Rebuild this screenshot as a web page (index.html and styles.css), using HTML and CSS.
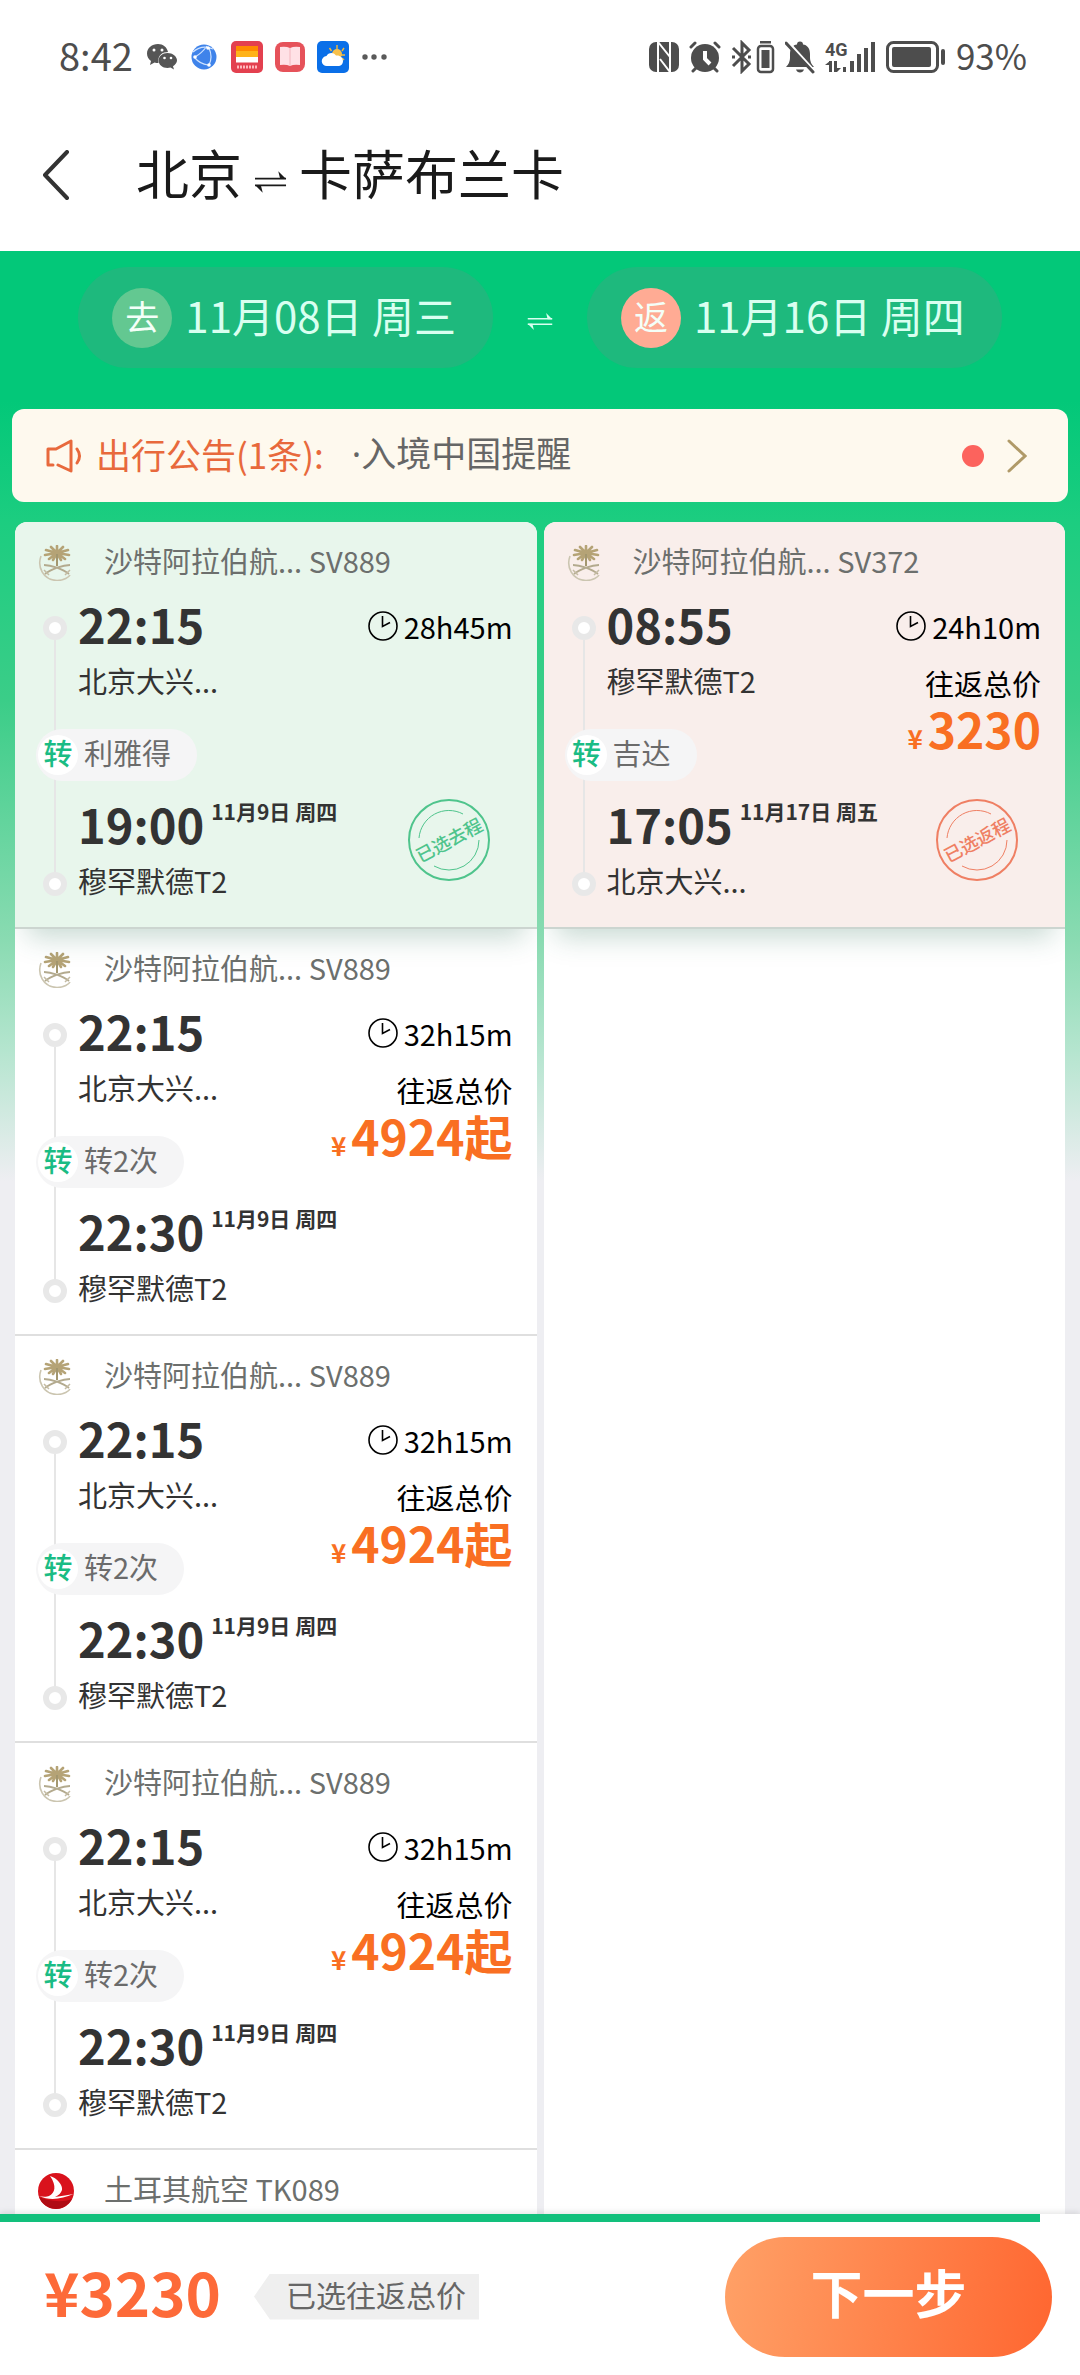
FILE: index.html
```
<!DOCTYPE html>
<html lang="zh-CN">
<head>
<meta charset="utf-8">
<meta name="viewport" content="width=device-width, initial-scale=1">
<title>北京 ⇌ 卡萨布兰卡</title>
<link rel="stylesheet" href="styles.css">
</head>
<body>
<svg class="sprite" aria-hidden="true">
  <symbol id="swap" viewBox="0 0 34 24">
    <path d="M1 8.500H33M1 15.500H33" fill="none" stroke="currentColor" stroke-width="2"/>
    <path d="M25 1l8 8h-6zM9 23l-8-8h6z" fill="currentColor"/>
  </symbol>
  <symbol id="clock" viewBox="0 0 30 30">
    <circle cx="15" cy="15" r="14" fill="none" stroke="currentColor" stroke-width="1.600"/>
    <path d="M14.500 5v10.500l7.500-4" fill="none" stroke="currentColor" stroke-width="1.600"/>
  </symbol>
  <symbol id="saudia" viewBox="0 0 36 36">
    <path d="M3 11C-1 22 5 35 19 35.500C26 35.500 31 32 32 30" fill="none" stroke="#cbc5b0" stroke-width="1.600"/>
    <path d="M19 8L8 5M19 8L7 10M19 8L13 2M19 8L11 14M19 8L19 1M19 8L25 2M19 8L30 5M19 8L31 10M19 8L27 14M19 8L15 15M19 8L23 15" stroke="#b5a376" stroke-width="2.600" stroke-linecap="round"/>
    <path d="M19 9v12" stroke="#a3976f" stroke-width="2"/>
    <path d="M6 20C13 20 25 24 31 29M32 20C25 20 13 24 7 29" fill="none" stroke="#b3aa8e" stroke-width="1.800"/>
    <path d="M6 25l5 5M32 25l-5 5" fill="none" stroke="#c4bca4" stroke-width="1.500"/>
  </symbol>
  <symbol id="turkish" viewBox="0 0 36 36">
    <circle cx="18" cy="18" r="18" fill="#d9121c"/>
    <path d="M1 24A18 18 0 0 0 34 26C24 30 10 28 1 24z" fill="#b00c14"/>
    <path d="M12 3C19 5 25 12 24 17C23 20 21 22 17 24C24 23 30 22 35.500 21C24 26 12 28 1 23C4 24 9 24 11 23C17 20 19 13 12 3z" fill="#fff"/>
  </symbol>
</svg>

<header class="top">
  <div class="status">
    <div class="status-side">
      <span class="status-time">8:42</span>
      <svg width="30" height="32" viewBox="0 0 30 32" fill="#555">
        <path d="M11 3C5 3 0 7 0 12.500c0 3 1.500 5.500 4 7.500l-1 4 4.500-2.500c1.300.4 2.500.5 4 .5C10 14 16 11 21 11C20 6 16 3 11 3z"/>
        <path d="M20.500 12c-5 0-9 3.500-9 7.500s4 7.500 9 7.500c1 0 2-.2 3-.5l3.500 2-1-3.300c2.400-1.500 4-3.500 4-5.700C30 15.500 25.500 12 20.500 12z"/>
        <g fill="#fff"><circle cx="7" cy="9" r="1.500"/><circle cx="15" cy="9" r="1.500"/><circle cx="17.500" cy="17" r="1.300"/><circle cx="24" cy="17" r="1.300"/></g>
      </svg>
      <svg width="32" height="32" viewBox="0 0 32 32">
        <circle cx="16" cy="16" r="12.500" fill="#3f83ea"/>
        <path d="M7 16Q14 12 19 5M21 7q4 9 0 17M7 17q5 6 13 7M5 11Q14 3 25 8" fill="none" stroke="#cfe3ff" stroke-width="1.200"/>
        <circle cx="7" cy="16" r="1.800" fill="#fff"/><circle cx="20" cy="7" r="1.800" fill="#fff"/><circle cx="21" cy="24" r="1.800" fill="#fff"/>
      </svg>
      <svg width="32" height="32" viewBox="0 0 32 32">
        <rect width="32" height="32" rx="5" fill="#e3404f"/>
        <path d="M5 5h22v6H5z" fill="#ff8a00"/><path d="M5 10h22v6H5z" fill="#ffb31a"/><path d="M5 16h22v5.500H5z" fill="#fff"/>
        <path d="M6 26h20" stroke="#ffb9bd" stroke-width="3" stroke-dasharray="2 1"/>
      </svg>
      <svg width="32" height="32" viewBox="0 0 32 32">
        <rect x="1" y="1" width="30" height="30" rx="8" fill="#e6525a"/>
        <path d="M6 6q6-1 10 1q4-2 10-1v18q-6-1-10 1q-4-2-10-1z" fill="#ffe1e6"/>
        <path d="M16 7v18" stroke="#f2b6be" stroke-width="1"/>
      </svg>
      <svg width="32" height="32" viewBox="0 0 32 32">
        <rect width="32" height="32" rx="5" fill="#0a6fe8"/>
        <path d="M20 4v4M12.500 7l2 3M27 7l-2 3M24 14h4M27 19l-2-2" stroke="#f3b93a" stroke-width="1.400"/>
        <circle cx="20" cy="13" r="5" fill="#f7c04a"/>
        <path d="M10 25a5 5 0 0 1-.5-10c1.500-3.500 7-4.500 9.500-.5c4-.5 7 2 7 5.500c0 3-2 5-5 5z" fill="#fff"/>
      </svg>
      <svg width="28" height="32" viewBox="0 0 28 32" fill="#5a5a5a"><circle cx="5" cy="16" r="2.700"/><circle cx="14" cy="16" r="2.700"/><circle cx="24" cy="16" r="2.700"/></svg>
    </div>
    <div class="status-side status-side-end">
      <svg width="30" height="32" viewBox="0 0 30 32">
        <rect y="1" width="30" height="30" rx="7" fill="#4d4d4d"/>
        <path d="M9 31V1L21 16V10M9 10V1M21 1V31L11 18" fill="none" stroke="#fff" stroke-width="2"/>
      </svg>
      <svg width="32" height="32" viewBox="0 0 32 32">
        <circle cx="16" cy="17" r="14" fill="#4d4d4d"/>
        <path d="M2 6L6 2M30 6L26 2M7 27l-3 3M25 27l3 3" stroke="#4d4d4d" stroke-width="3" stroke-linecap="round"/>
        <path d="M16 10v8l5 5" fill="none" stroke="#fff" stroke-width="4"/>
      </svg>
      <svg width="44" height="34" viewBox="0 0 44 34">
        <path d="M2 8L18 24L11 31V3L18 10L2 26M1 17h3M17 17h3" fill="none" stroke="#4d4d4d" stroke-width="3"/>
        <rect x="27" y="6" width="15" height="26" rx="3" fill="none" stroke="#4d4d4d" stroke-width="2.500"/>
        <path d="M30.500 10h8v18h-8zM29 1h11v2.500H29z" fill="#4d4d4d"/>
      </svg>
      <svg width="30" height="34" viewBox="0 0 30 34">
        <path d="M1 27q4-4 4-9v-4C5 8 8 5 12 4.500a3 3 0 0 1 6 0C22 5 25 8 25 14v4q0 5 4 9zM11 29.500h8q-1 3-4 3t-4-3z" fill="#4d4d4d"/>
        <path d="M3 2L31 33" stroke="#fff" stroke-width="3"/>
        <path d="M1 3L28 32" stroke="#4d4d4d" stroke-width="3" stroke-linecap="round"/>
      </svg>
      <svg width="51" height="34" viewBox="0 0 51 34" fill="#4d4d4d">
        <text class="net" x="0" y="16">4G</text>
        <path d="M4 21h3v11H4zM0 25l5-4v4zM9 21h3v11H9zM12 32l4-4h-4zM18 27h3v5h-3zM25 21h4v11h-4zM32 14h4v18h-4zM39 8h4v24h-4zM46 2h4v30h-4z"/>
      </svg>
      <svg width="60" height="34" viewBox="0 0 60 34">
        <rect x="1.500" y="2.500" width="50" height="29" rx="6" fill="none" stroke="#4d4d4d" stroke-width="3"/>
        <rect x="6" y="7" width="39" height="20" rx="2" fill="#4d4d4d"/>
        <rect x="55" y="9" width="4" height="16" rx="2" fill="#4d4d4d"/>
      </svg>
      <span class="status-level">93%</span>
    </div>
  </div>
  <div class="nav">
    <button class="back" type="button" aria-label="返回">
      <svg width="28" height="50" viewBox="0 0 28 50"><path d="M25 2L3 25L25 48" fill="none" stroke="#333" stroke-width="4" stroke-linecap="round" stroke-linejoin="round"/></svg>
    </button>
    <h1 class="route">北京<svg width="33" height="24"><use href="#swap"/></svg>卡萨布兰卡</h1>
  </div>
</header>

<main class="main">
  <div class="dates">
    <button class="date" type="button"><span class="date-tag">去</span><span class="date-text">11月08日 周三</span></button>
    <svg class="dates-swap" width="26" height="19"><use href="#swap"/></svg>
    <button class="date" type="button"><span class="date-tag date-tag-return">返</span><span class="date-text">11月16日 周四</span></button>
  </div>

  <a class="notice" href="#notice">
    <svg width="38" height="34" viewBox="0 0 38 34" fill="none" stroke="#e8693c" stroke-width="3" stroke-linecap="round" stroke-linejoin="round">
      <path d="M7 26H2V10H10L25 2V32L12 26M31 10q5 7 0 14"/>
    </svg>
    <span class="notice-title">出行公告(1条):</span>
    <span class="notice-text">·入境中国提醒</span>
    <span class="notice-dot"></span>
    <svg width="20" height="34" viewBox="0 0 20 34"><path d="M2 2L18 17L2 32" fill="none" stroke="#b09a68" stroke-width="3" stroke-linecap="round"/></svg>
  </a>

  <div class="columns">
    <section class="column" aria-label="去程">
      <article class="flight flight-go">
        <h2 class="carrier"><svg width="36" height="36"><use href="#saudia"/></svg><span>沙特阿拉伯航... SV889</span></h2>
        <div class="trip">
          <div class="rail"><i></i><i></i></div>
          <div class="time depart">22:15</div>
          <div class="place depart-place">北京大兴...</div>
          <div class="stop"><b>转</b>利雅得</div>
          <div class="time arrive">19:00<sup>11月9日 周四</sup></div>
          <div class="place arrive-place">穆罕默德T2</div>
          <div class="side">
            <div class="duration"><svg width="30" height="30"><use href="#clock"/></svg>28h45m</div>
          </div>
          <svg class="stamp stamp-go" width="84" height="84" viewBox="0 0 84 84">
            <circle cx="42" cy="42" r="40" fill="none" stroke="currentColor" stroke-width="2"/>
            <path d="M12 40A30 30 0 0 1 56 16M27 68A30 30 0 0 0 72 42" fill="none" stroke="currentColor" stroke-width="1"/>
            <text x="42" y="49" text-anchor="middle" transform="rotate(-28 42 42)">已选去程</text>
          </svg>
        </div>
      </article>
      <article class="flight">
        <h2 class="carrier"><svg width="36" height="36"><use href="#saudia"/></svg><span>沙特阿拉伯航... SV889</span></h2>
        <div class="trip">
          <div class="rail"><i></i><i></i></div>
          <div class="time depart">22:15</div>
          <div class="place depart-place">北京大兴...</div>
          <div class="stop"><b>转</b>转2次</div>
          <div class="time arrive">22:30<sup>11月9日 周四</sup></div>
          <div class="place arrive-place">穆罕默德T2</div>
          <div class="side">
            <div class="duration"><svg width="30" height="30"><use href="#clock"/></svg>32h15m</div>
            <div class="label">往返总价</div>
            <div class="price"><small>¥</small>4924起</div>
          </div>
        </div>
      </article>
      <article class="flight">
        <h2 class="carrier"><svg width="36" height="36"><use href="#saudia"/></svg><span>沙特阿拉伯航... SV889</span></h2>
        <div class="trip">
          <div class="rail"><i></i><i></i></div>
          <div class="time depart">22:15</div>
          <div class="place depart-place">北京大兴...</div>
          <div class="stop"><b>转</b>转2次</div>
          <div class="time arrive">22:30<sup>11月9日 周四</sup></div>
          <div class="place arrive-place">穆罕默德T2</div>
          <div class="side">
            <div class="duration"><svg width="30" height="30"><use href="#clock"/></svg>32h15m</div>
            <div class="label">往返总价</div>
            <div class="price"><small>¥</small>4924起</div>
          </div>
        </div>
      </article>
      <article class="flight">
        <h2 class="carrier"><svg width="36" height="36"><use href="#saudia"/></svg><span>沙特阿拉伯航... SV889</span></h2>
        <div class="trip">
          <div class="rail"><i></i><i></i></div>
          <div class="time depart">22:15</div>
          <div class="place depart-place">北京大兴...</div>
          <div class="stop"><b>转</b>转2次</div>
          <div class="time arrive">22:30<sup>11月9日 周四</sup></div>
          <div class="place arrive-place">穆罕默德T2</div>
          <div class="side">
            <div class="duration"><svg width="30" height="30"><use href="#clock"/></svg>32h15m</div>
            <div class="label">往返总价</div>
            <div class="price"><small>¥</small>4924起</div>
          </div>
        </div>
      </article>
      <article class="flight">
        <h2 class="carrier"><svg width="36" height="36"><use href="#turkish"/></svg><span>土耳其航空 TK089</span></h2>
      </article>
    </section>

    <section class="column" aria-label="返程">
      <article class="flight flight-return">
        <h2 class="carrier"><svg width="36" height="36"><use href="#saudia"/></svg><span>沙特阿拉伯航... SV372</span></h2>
        <div class="trip">
          <div class="rail"><i></i><i></i></div>
          <div class="time depart">08:55</div>
          <div class="place depart-place">穆罕默德T2</div>
          <div class="stop"><b>转</b>吉达</div>
          <div class="time arrive">17:05<sup>11月17日 周五</sup></div>
          <div class="place arrive-place">北京大兴...</div>
          <div class="side">
            <div class="duration"><svg width="30" height="30"><use href="#clock"/></svg>24h10m</div>
            <div class="label">往返总价</div>
            <div class="price"><small>¥</small>3230</div>
          </div>
          <svg class="stamp stamp-return" width="84" height="84" viewBox="0 0 84 84">
            <circle cx="42" cy="42" r="40" fill="none" stroke="currentColor" stroke-width="2"/>
            <path d="M12 40A30 30 0 0 1 56 16M27 68A30 30 0 0 0 72 42" fill="none" stroke="currentColor" stroke-width="1"/>
            <text x="42" y="49" text-anchor="middle" transform="rotate(-28 42 42)">已选返程</text>
          </svg>
        </div>
      </article>
    </section>
  </div>
</main>

<footer class="footer">
  <div class="progress"><div class="progress-fill"></div></div>
  <div class="checkout">
    <strong class="total">¥3230</strong>
    <span class="total-tag">已选往返总价</span>
    <button class="next" type="button">下一步</button>
  </div>
</footer>
</body>
</html>
```

FILE: styles.css
```
* { box-sizing: border-box; }

body {
  margin: 0;
  height: 100vh;
  display: flex;
  flex-direction: column;
  background: #fff;
  color: #333;
  font-family: "Noto Sans CJK SC", "Noto Sans", sans-serif;
}

button {
  border: 0;
  padding: 0;
  background: none;
  color: inherit;
  font: inherit;
}

svg { display: block; flex: none; }
.sprite { position: absolute; width: 0; height: 0; }

/* Status bar and title */
.status {
  display: flex;
  justify-content: space-between;
  align-items: center;
  height: 114px;
  padding: 0 53px 0 59px;
  color: #4d4d4d;
}
.status-side { display: flex; align-items: center; gap: 11px; }
.status-side-end { gap: 10px; }
.status-time { font-size: 38px; line-height: 48px; padding: 0 3px 4px 0; }
.status-level { font-size: 35px; line-height: 48px; padding-bottom: 4px; }
.net { font: 700 18px Roboto, sans-serif; }

.nav {
  display: flex;
  align-items: center;
  gap: 66px;
  height: 137px;
  padding: 0 42px 16px;
}
.back { flex: none; }
.route {
  display: flex;
  align-items: center;
  gap: 12px;
  margin: 0;
  padding-bottom: 6px;
  color: #1a1a1a;
  font-size: 53px;
  font-weight: 400;
  line-height: 64px;
}
.route svg { margin-top: 20px; }

/* Green area */
.main {
  flex: 1;
  min-height: 0;
  display: flex;
  flex-direction: column;
  padding: 16px 12px 0;
  background: linear-gradient(#03c879 0, #03c879 150px, #1ccd80 270px, #3bcd88 450px, #8adbb2 690px, #b5e5cf 800px, #eeeef2 930px);
}
.dates {
  display: flex;
  justify-content: center;
  align-items: center;
  gap: 34px;
  color: #d9fff0;
}
.dates-swap { margin-top: 8px; }
.date {
  display: flex;
  align-items: center;
  gap: 13px;
  height: 101px;
  padding: 0 37px 0 34px;
  border-radius: 51px;
  background: #1eb97d;
  font-size: 42px;
  line-height: 60px;
}
.date-text { padding-bottom: 5px; }
.date-tag {
  width: 60px;
  height: 60px;
  border-radius: 50%;
  background: #63c891;
  color: #f4fff8;
  font-size: 34px;
  line-height: 56px;
  text-align: center;
}
.date-tag-return { background: #ffab94; }

.notice {
  flex: none;
  display: flex;
  align-items: center;
  height: 93px;
  margin: 41px 0 20px;
  padding: 0 41px 0 34px;
  border-radius: 12px;
  background: #fef9ee;
  color: #666;
  font-size: 35px;
  line-height: 48px;
  text-decoration: none;
}
.notice-title { padding: 0 28px 4px 12px; color: #e8693c; }
/* The Latin face comes first so that the bullet dot is narrow */
.notice-text { flex: 1; padding-bottom: 4px; font-family: "Noto Sans", "Noto Sans CJK SC", sans-serif; }
.notice-dot {
  width: 22px;
  height: 22px;
  margin-right: 23px;
  border-radius: 50%;
  background: #fc635d;
}

/* Two flight lists */
.columns {
  flex: 1;
  min-height: 0;
  display: flex;
  gap: 7px;
  padding: 0 3px;
}
.column {
  flex: 1;
  min-width: 0;
  overflow: hidden;
  border-radius: 12px 12px 0 0;
  background: #fff;
}
.flight {
  padding: 18px 24px 27px 21px;
  border-bottom: 2px solid #dfdfdf;
}
.flight-go,
.flight-return {
  position: relative;
  border-bottom-color: #ccd5d0;
  box-shadow: 0 20px 26px -12px rgba(40, 110, 80, .26);
}
.flight-go { background: #e8f6ec; }
.flight-return { background: #f9eeeb; }

.carrier {
  display: flex;
  align-items: center;
  gap: 30px;
  height: 46px;
  margin: 0 0 10px 2px;
  color: #6c6f6d;
  font-size: 29px;
  font-weight: 400;
  line-height: 40px;
}
.carrier span { padding-bottom: 6px; }
.trip {
  display: grid;
  grid-template: 56px 48px 81px 71px 48px / 24px 1fr;
  column-gap: 11px;
  margin-left: 7px;
}
.trip > * { grid-column: 2; align-self: end; }
.depart { grid-row: 1; }
.depart-place { grid-row: 2; }
.arrive { grid-row: 4; }
.arrive-place { grid-row: 5; }

.trip > .rail {
  grid-area: 1 / 1 / 6 / 2;
  align-self: stretch;
  display: flex;
  flex-direction: column;
  justify-content: space-between;
  padding: 20px 0 4px;
  background: linear-gradient(#e6e6e6, #e6e6e6) center 44px / 2px 240px no-repeat;
}
.rail i {
  width: 24px;
  height: 24px;
  border: 6px solid #e8e8e8;
  border-radius: 50%;
  background: #fff;
}

.time {
  display: flex;
  font-size: 47px;
  font-weight: 700;
  line-height: 56px;
}
.time sup {
  margin-left: 7px;
  font-size: 21px;
  line-height: 30px;
}
.place {
  font-size: 29px;
  line-height: 40px;
}
.trip > .stop {
  grid-area: 3 / 1 / 4 / 3;
  justify-self: start;
  display: flex;
  gap: 6px;
  margin-left: -7px;
  padding: 0 26px 6px 2px;
  border-radius: 26px;
  background: #f5f5f6;
  color: #6b6b6b;
  font-size: 29px;
  line-height: 46px;
}
.stop b {
  width: 40px;
  height: 40px;
  margin-top: 6px;
  border-radius: 50%;
  background: #fff;
  color: #1abc84;
  font-weight: 500;
  line-height: 35px;
  text-align: center;
}
.trip > .side {
  grid-row: 1 / 4;
  justify-self: end;
  align-self: start;
  color: #000;
  font-size: 29px;
  line-height: 40px;
  text-align: right;
}
.duration {
  display: flex;
  justify-content: flex-end;
  align-items: center;
  gap: 6px;
  height: 60px;
  margin-bottom: 7px;
}
.price {
  color: #f96f22;
  font-size: 48px;
  font-weight: 700;
  line-height: 50px;
}
.price small { margin-right: 5px; font-size: 26px; }

.trip > .stamp {
  grid-row: 4 / 6;
  justify-self: end;
  align-self: start;
  margin: 17px 22px 0 0;
}
.stamp text { font-size: 18px; font-weight: 500; fill: currentColor; }
.stamp-go { color: #4fc48c; }
.stamp-return { color: #ef7f63; }

/* Bottom bar */
.footer {
  position: relative;
  background: #fff;
  box-shadow: 0 -2px 6px rgba(0, 0, 0, .1);
}
.progress { height: 8px; }
.progress-fill { width: 96.300%; height: 100%; background: #12c07c; }
.checkout {
  display: flex;
  align-items: center;
  height: 153px;
  padding: 0 28px 4px 44px;
}
.total {
  color: #fd6a39;
  font-size: 60px;
  line-height: 68px;
  padding-bottom: 12px;
}
.total-tag {
  margin-left: 33px;
  padding: 0 13px 5px 32px;
  background: #efefef;
  clip-path: polygon(0 50%, 16px 0, 100% 0, 100% 100%, 16px 100%);
  color: #666;
  font-size: 30px;
  line-height: 41px;
}
.next {
  width: 327px;
  height: 120px;
  margin-left: auto;
  padding-bottom: 10px;
  border-radius: 60px;
  background: linear-gradient(100deg, #ffa167, #ff6630);
  color: #fff;
  font-size: 52px;
  font-weight: 700;
}
```
